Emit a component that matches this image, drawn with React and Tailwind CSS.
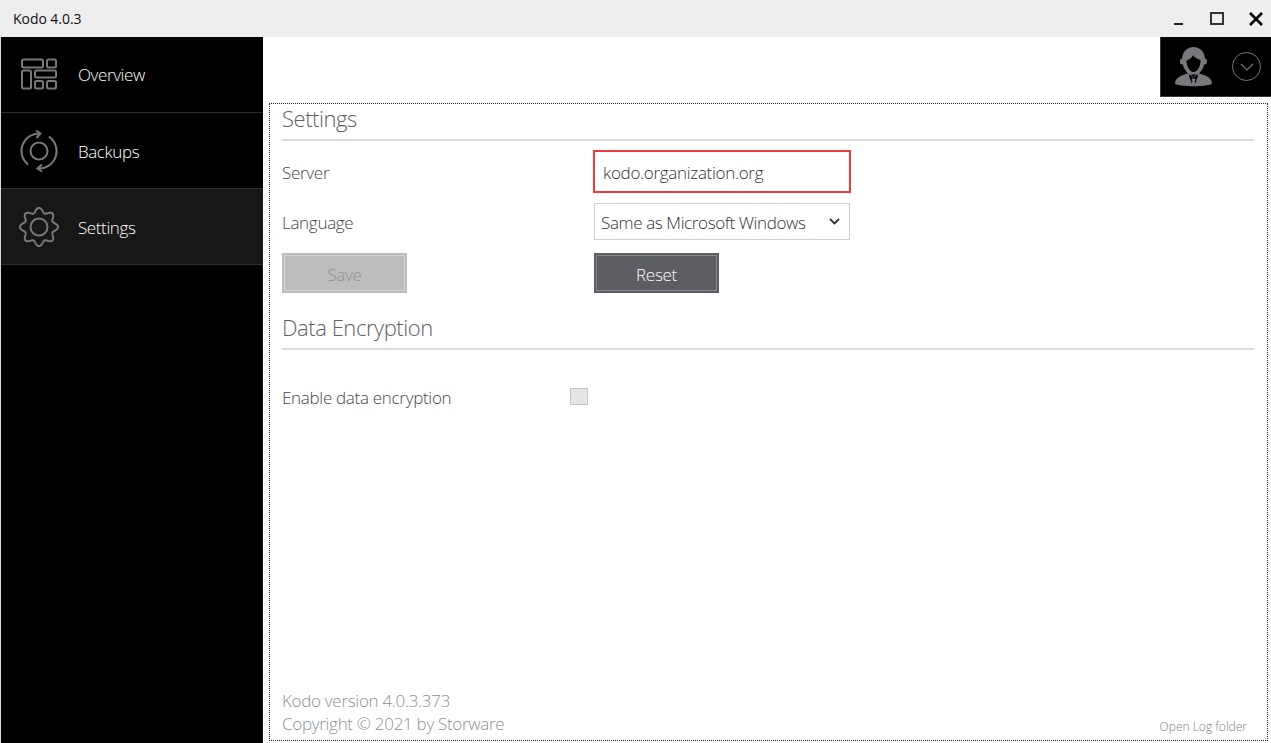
import React from "react";

function NavItem({ label, active, icon, first }) {
  return (
    <div className={`flex h-[76px] items-center border-b border-[#2e2e2e] ${active ? "bg-[#171717]" : ""}`}>
      <div className="flex w-[77px] shrink-0 items-center justify-center pr-[1px]">{icon}</div>
      <span className={`${first ? "pb-[1px]" : "pt-[1px]"} text-[17px] font-light leading-none tracking-[-0.4px] text-white`}>{label}</span>
    </div>
  );
}

const OverviewIcon = (
  <svg className="mb-[1px]" width="38" height="32" viewBox="0 0 38 32" fill="none" stroke="#77787b" strokeWidth="2">
    <rect x="2" y="1.5" width="21" height="8" rx="1.5" />
    <rect x="27" y="1.5" width="9" height="8" rx="1.5" />
    <rect x="2" y="12.5" width="9" height="18" rx="1.5" />
    <rect x="15" y="12.5" width="21" height="7" rx="1.5" />
    <rect x="15" y="23" width="8" height="7.5" rx="1.5" />
    <rect x="27" y="23" width="9" height="7.5" rx="1.5" />
  </svg>
);

const BackupsIcon = (
  <svg width="50" height="50" viewBox="-1 0 50 50" fill="none" stroke="#77787b" strokeWidth="2">
    <circle cx="24" cy="25" r="8.500" />
    <path d="M25 7.500A17.500 17.500 0 0 0 13 38.600" />
    <path d="M21 4.500l4.500 3-4 4.500" />
    <path d="M34 10.600A17.500 17.500 0 0 1 23 42.500" />
    <path d="M27 38.500l-4.500 4 4.500 3" />
  </svg>
);

const gearPath = (() => {
  const pts = [];
  for (let i = 0; i < 240; i++) {
    const t = (i / 240) * Math.PI * 2;
    const r = 16.8 + 2.3 * Math.cos(8 * t);
    pts.push(`${(24 + r * Math.sin(t)).toFixed(2)} ${(25 - r * Math.cos(t)).toFixed(2)}`);
  }
  return "M" + pts.join("L") + "Z";
})();

const SettingsIcon = (
  <svg width="50" height="50" viewBox="-1 0 50 50" fill="none" stroke="#77787b" strokeWidth="2">
    <circle cx="24" cy="25" r="8.500" />
    <path d={gearPath} strokeLinejoin="round" />
  </svg>
);

const UserIcon = (
  <svg width="37" height="40" viewBox="0 0 37 40" fill="#77787b">
    <path d="M7 13C7 5 12 0 18.500 0C25 0 30 5 30 13C30 19 26 25.500 22.500 27.500L14.500 27.500C11 25.500 7 19 7 13Z" />
    <ellipse cx="6.800" cy="14.500" rx="1.800" ry="3" />
    <ellipse cx="30.200" cy="14.500" rx="1.800" ry="3" />
    <path d="M11.500 13.500C14 13 16.500 11 18 8.500C20 10.500 23 12.500 25.500 13C25.800 19 22.500 25 18.500 25C14.500 25 11.500 19 11.500 13.500Z" fill="#000" />
    <path d="M0 37C0 31 5 29 11 27L14 26L18.500 30L23 26L26 27C32 29 37 31 37 37C30 40 7 40 0 37Z" />
    <path d="M14.500 27.500L18.500 30.500L22.500 27.500L23 29L19 39.500H18L14 29Z" fill="#000" />
    <path d="M17 31.500H20L20.400 33.200L19.600 34.200L20.500 38L18.500 39.500L16.500 38L17.400 34.200L16.600 33.200Z" />
  </svg>
);

function Heading({ children }) {
  return (
    <div className="border-b-2 border-[#dcdcdc] pb-[6px]">
      <div className="text-[22px] font-light leading-[29px] tracking-[-0.45px] text-[#5d6066]">{children}</div>
    </div>
  );
}

const fieldText = "text-[17px] font-light tracking-[-0.3px]";

export default function App() {
  return (
    <div className="flex h-[743px] w-[1271px] flex-col overflow-hidden bg-white text-[#333]" style={{ fontFamily: '"Open Sans", sans-serif' }}>
      <div className="flex h-[37px] shrink-0 items-center justify-between bg-[#eeeeee] pl-[13px]">
        <span className="text-[14px] leading-none tracking-[-0.05px] text-[#111]">Kodo 4.0.3</span>
        <div className="flex items-center">
          <span className="mr-[27px] mt-[10px] h-[2px] w-[9px] bg-[#222]" />
          <span className="mr-[25px] h-[13px] w-[14px] border-2 border-[#333]" />
          <svg className="mr-[8px]" width="14" height="14" viewBox="0 0 14 14" stroke="#000" strokeWidth="2.600">
            <path d="M1 1l12 12M13 1L1 13" />
          </svg>
        </div>
      </div>
      <div className="flex min-h-0 flex-1 border-l border-[#d8d8d8]">
        <aside className="flex w-[262px] shrink-0 flex-col bg-black">
          <NavItem label="Overview" icon={OverviewIcon} first />
          <NavItem label="Backups" icon={BackupsIcon} />
          <NavItem label="Settings" active icon={SettingsIcon} />
          <div className="flex-1 border-r border-[#1c1c1c]" />
        </aside>
        <div className="flex min-w-0 flex-1 flex-col">
          <div className="flex h-[60px] shrink-0 justify-end">
            <div className="flex w-[111px] items-center border-b border-l border-[#3a3a3a] bg-black pl-[14px]">
              {UserIcon}
              <div className="ml-[20px] flex h-[29px] w-[29px] items-center justify-center rounded-full border border-[#77787b]">
                <svg width="14" height="8" viewBox="0 0 14 8" fill="none" stroke="#77787b" strokeWidth="1.200"><path d="M1 1l6 6 6-6" /></svg>
              </div>
            </div>
          </div>
          <main className="mb-[2px] ml-[6px] mr-[3px] mt-[6px] flex min-h-0 flex-1 flex-col border border-dotted border-[#222] pl-[12px] pr-[13px]">
            <Heading>Settings</Heading>
            <div className="mt-[9px] flex h-[43px] items-center">
              <span className={`w-[311px] pt-[2px] ${fieldText} text-[#44464b]`}>Server</span>
              <div className={`flex h-[43px] w-[258px] items-center border-2 border-[#ee3b3b] pl-[8px] pt-[2px] ${fieldText} text-[#333]`}>kodo.organization.org</div>
            </div>
            <div className="mt-[10px] flex h-[37px] items-center">
              <span className={`w-[312px] pt-[2px] ${fieldText} text-[#44464b]`}>Language</span>
              <div className="flex h-[37px] w-[256px] items-center justify-between border border-[#cfcfcf] pl-[6px] pr-[9px] pt-[2px] text-[17px] font-light tracking-[-0.38px] text-[#333]">
                Same as Microsoft Windows
                <svg className="mb-[2px]" width="11" height="7" viewBox="0 0 11 7" fill="none" stroke="#333" strokeWidth="1.800"><path d="M1 1l4.500 4.500L10 1" /></svg>
              </div>
            </div>
            <div className="mt-[13px] flex">
              <button className={`flex h-[40px] w-[125px] items-center justify-center border-2 border-[#bdbdbd] bg-[#bdbdbd] pt-[3px] outline outline-1 -outline-offset-3 outline-[#d4d4d4] ${fieldText} text-[#8f8f8f]`}>Save</button>
              <button className={`ml-[187px] flex h-[40px] w-[125px] items-center justify-center border-2 border-[#5c5e63] bg-[#5c5e63] pt-[3px] outline outline-1 -outline-offset-3 outline-[#85878b] ${fieldText} text-white`}>Reset</button>
            </div>
            <div className="mt-[20px]"><Heading>Data Encryption</Heading></div>
            <div className="mt-[35px] flex items-center">
              <span className={`w-[288px] ${fieldText} text-[#44464b]`}>Enable data encryption</span>
              <span className="mb-[3px] h-[17px] w-[18px] border border-[#c4c4c4] bg-[#e6e6e6]" />
            </div>
            <div className="mt-auto flex items-end justify-between pb-[5px]">
              <div className="text-[17px] font-light leading-[23px] tracking-[-0.3px] text-[#8d9196]">
                <div>Kodo version 4.0.3.373</div>
                <div>Copyright © 2021 by Storware</div>
              </div>
              <span className="mb-[2px] mr-[7px] text-[12px] font-light leading-none text-[#7d8186]">Open Log folder</span>
            </div>
          </main>
        </div>
      </div>
    </div>
  );
}
